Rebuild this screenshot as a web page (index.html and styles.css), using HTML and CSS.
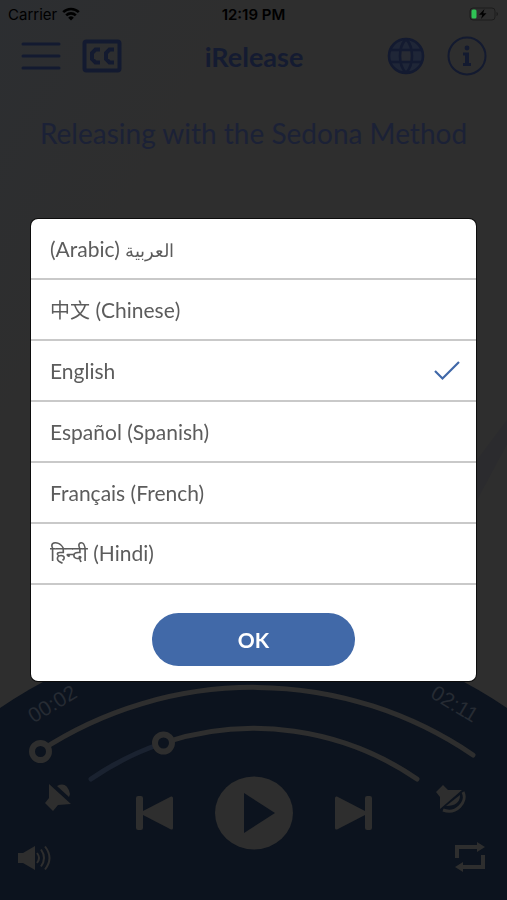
FILE: index.html
```html
<!DOCTYPE html>
<html lang="en">
<head>
<meta charset="utf-8">
<meta name="viewport" content="width=device-width, initial-scale=1">
<title>iRelease</title>
<link rel="stylesheet" href="styles.css">
</head>
<body>
<div class="app">
  <div class="status">
    <div class="status-left">
      <span>Carrier</span>
      <svg width="18" height="14" viewBox="0 0 18 14" fill="none" stroke="#000" stroke-width="2.6">
        <path d="M1.2 5.2a11 11 0 0 1 15.6 0M4.2 8.4a6.8 6.8 0 0 1 9.6 0"/>
        <path d="M9 13.6 6.2 10.7a4 4 0 0 1 5.6 0z" fill="#000" stroke="none"/>
      </svg>
    </div>
    <span class="clock">12:19 PM</span>
    <div class="status-right">
      <svg width="30" height="14" viewBox="0 0 30 14">
        <rect x="1" y="1" width="25" height="12" rx="3" fill="none" stroke="#1c1c1c"/>
        <rect x="2.500" y="2.500" width="5" height="9" rx="1.500" fill="#2fc455"/>
        <path d="M15.500 2 10 7.800h3.300L12 12l5.500-5.800h-3.300z" fill="#000"/>
        <path d="M27.500 5v4q1.500-.6 1.500-2t-1.500-2z" fill="#1c1c1c"/>
      </svg>
    </div>
  </div>

  <header class="nav">
    <div class="nav-group">
      <button class="icon-btn" type="button" aria-label="Menu">
        <svg width="40" height="40" viewBox="0 0 40 40" stroke="#131a30" stroke-width="3" stroke-linecap="round"><path d="M2 8h36M2 20h36M2 32h36"/></svg>
      </button>
      <button class="icon-btn" type="button" aria-label="Closed captions">
        <svg width="40" height="40" viewBox="0 0 40 40" fill="none" stroke="#131a30">
          <rect x="2.500" y="5.500" width="35" height="29" rx="2" stroke-width="4"/>
          <path d="M18 13.500h-4.500L10 17v6l3.500 3.500H18M32 13.500h-4.500L24 17v6l3.500 3.500H32" stroke-width="4"/>
        </svg>
      </button>
    </div>
    <h1 class="brand">iRelease</h1>
    <div class="nav-group nav-end">
      <button class="icon-btn" type="button" aria-label="Language">
        <svg width="40" height="40" viewBox="0 0 40 40" fill="none" stroke="#131a30" stroke-width="2.600">
          <circle cx="20" cy="20" r="17" fill="#1f2637"/>
          <path d="M15 14h10v12H15z" fill="#282b33" stroke="none"/>
          <path d="M20 3C12 11 12 29 20 37M20 3c8 8 8 26 0 34M4.500 14h31M4.500 26h31"/>
        </svg>
      </button>
      <button class="icon-btn" type="button" aria-label="Information">
        <svg width="40" height="40" viewBox="0 0 40 40">
          <circle cx="20" cy="20" r="18.500" fill="none" stroke="#131a30" stroke-width="2"/>
          <circle cx="20" cy="12" r="2.400" fill="#131a30"/>
          <path d="M16 16.500h6V27h2v3h-8v-3h2v-7.500h-2z" fill="#131a30"/>
        </svg>
      </button>
    </div>
  </header>

  <main class="stage">
    <h2 class="track">Releasing with the Sedona Method</h2>
    <svg class="facet" viewBox="0 0 30 90" aria-hidden="true"><path d="M30 10V34L0 90V50z" fill="#2b2b2e"/></svg>
  </main>

  <section class="player" aria-label="Player">
    <svg class="dial" viewBox="0 0 507 270" fill="none" stroke-linecap="round">
      <path d="M0 78A448 448 0 0 1 507 78V270H0z" fill="#0c131e"/>
      <path d="M40 121A390 390 0 0 1 473 125" stroke="#2e2e2e" stroke-width="5"/>
      <path d="M91 149A289 289 0 0 1 163 113" stroke="#1a2230" stroke-width="5"/>
      <path d="M163 113A289 289 0 0 1 417 149" stroke="#2e2e2e" stroke-width="5"/>
      <circle cx="40.500" cy="121.500" r="8.500" fill="#0c131e" stroke="#2e2e2e" stroke-width="6"/>
      <circle cx="163.500" cy="113" r="8.500" fill="#0c131e" stroke="#2e2e2e" stroke-width="6"/>
      <text class="time" text-anchor="middle" transform="translate(56 80) rotate(-31)">00:02</text>
      <text class="time" text-anchor="middle" transform="translate(451 80) rotate(31)">02:11</text>
    </svg>
    <div class="controls">
      <div class="row">
        <button class="icon-btn" type="button" aria-label="Mute voice">
          <svg width="40" height="40" viewBox="0 0 40 40" fill="#2e2e2e">
            <path d="M14 10 36 30l-13 1-5 6-8-8 4-5z"/>
            <path d="M22 12q10-5 13 8l-1 3z"/>
          </svg>
        </button>
        <div class="transport">
          <button class="icon-btn" type="button" aria-label="Previous">
            <svg width="40" height="40" viewBox="0 0 40 40" fill="#2e2e2e"><rect x="1" y="3" width="7" height="34" rx="2"/><path d="M8 18 36 3.500q2-.5 2 1.500v30q0 2-2 1.500L8 22z"/></svg>
          </button>
          <button class="icon-btn" type="button" aria-label="Play">
            <svg width="78" height="78" viewBox="0 0 78 78"><ellipse cx="39" cy="39" rx="39" ry="36.500" fill="#2e2e2e"/><path d="M29 19v40l31-20z" fill="#0c131e"/></svg>
          </button>
          <button class="icon-btn" type="button" aria-label="Next">
            <svg width="40" height="40" viewBox="0 0 40 40" fill="#2e2e2e"><rect x="32" y="3" width="7" height="34" rx="2"/><path d="M32 18 4 3.500Q2 3 2 5v30q0 2 2 1.500L32 22z"/></svg>
          </button>
        </div>
        <button class="icon-btn" type="button" aria-label="Mute music">
          <svg width="40" height="40" viewBox="0 0 40 40" fill="none" stroke="#2e2e2e" stroke-width="3">
            <path d="m4 18 7-7 5 5h14L8 35V23z" fill="#2e2e2e" stroke="none"/>
            <path d="M14 32 28 21q0 11-14 11z" fill="#2e2e2e" stroke="none"/>
            <path d="M31 18c5 10-7 23-20 18"/>
          </svg>
        </button>
      </div>
      <div class="row row-low">
        <button class="icon-btn" type="button" aria-label="Volume">
          <svg width="40" height="40" viewBox="0 0 40 40" fill="none" stroke="#2e2e2e" stroke-width="2">
            <path d="M3 15h5L20 8v24L8 25H3z" fill="#2e2e2e" stroke="none"/>
            <path d="M22 15q4 5 0 10M26 11.500q6 8.500 0 17M30 8.500q9 11.500 0 23"/>
          </svg>
        </button>
        <button class="icon-btn" type="button" aria-label="Repeat">
          <svg width="40" height="40" viewBox="0 0 40 40" fill="none" stroke="#2e2e2e" stroke-width="4">
            <path d="M5 20V9h21M31 17v12H10"/>
            <path d="M25 4v10l8-5zM11 24v10l-8-5z" fill="#2e2e2e" stroke="none"/>
          </svg>
        </button>
      </div>
    </div>
  </section>
</div>

<div class="overlay">
  <form class="dialog" role="dialog" aria-label="Choose a language">
    <label class="option"><span>(Arabic) <span class="arabic" lang="ar">العربية</span></span><input type="radio" name="language"></label>
    <label class="option"><span><span class="native" lang="zh">中文</span> (Chinese)</span><input type="radio" name="language"></label>
    <label class="option"><span>English</span><input type="radio" name="language" checked>
      <svg class="tick" width="26" height="20" viewBox="0 0 26 20" fill="none" stroke="#4068a8" stroke-width="2.200"><path d="m1 10 7.500 7.500L25 1"/></svg>
    </label>
    <label class="option"><span>Español (Spanish)</span><input type="radio" name="language"></label>
    <label class="option"><span>Français (French)</span><input type="radio" name="language"></label>
    <label class="option"><span><span class="native" lang="hi">हिन्दी</span> (Hindi)</span><input type="radio" name="language"></label>
    <div class="actions"><button class="ok" type="button">OK</button></div>
  </form>
</div>
</body>
</html>
```
FILE: styles.css
```css
* { box-sizing: border-box; }

body {
  margin: 0;
  background: #2e2e2e;
  font-family: Lato, "Noto Sans CJK SC", "Noto Sans", sans-serif;
}

.app {
  display: flex;
  flex-direction: column;
  min-height: 100vh;
  background: linear-gradient(120deg, #2c2e31 0, #2e2e2e 24%);
}

.status {
  display: grid;
  grid-template-columns: 1fr auto 1fr;
  align-items: center;
  height: 28px;
  padding: 0 8px;
  color: #000;
  font-family: Inter, "Liberation Sans", sans-serif;
  font-size: 15px;
}
.status-left { display: flex; align-items: center; gap: 5px; }
.status-right { display: flex; justify-content: flex-end; }
.clock { font-weight: 600; }

.nav {
  display: grid;
  grid-template-columns: 1fr auto 1fr;
  align-items: center;
  height: 56px;
  padding: 0 20px 0 21px;
}
.nav-group { display: flex; gap: 21px; }
.nav-end { justify-content: flex-end; }

.icon-btn {
  display: block;
  padding: 0;
  border: 0;
  background: none;
}
.icon-btn svg { display: block; }

.brand {
  margin: 0;
  color: #141b31;
  font-size: 27px;
  font-weight: 700;
}

.stage {
  position: relative;
  flex: 1;
  padding: 31px 20px;
}
.track {
  margin: 0;
  color: #1b2136;
  font-size: 28px;
  font-weight: 400;
  line-height: 36px;
  text-align: center;
}
.facet {
  position: absolute;
  right: 0;
  bottom: 130px;
  width: 30px;
}

.player { display: grid; }
.dial, .controls { grid-area: 1 / 1; }
.dial { display: block; width: 100%; }
.time {
  fill: #262b33;
  font-family: "Liberation Sans", sans-serif;
  font-size: 21px;
}
.controls {
  display: flex;
  flex-direction: column;
  justify-content: flex-end;
  padding: 0 15px 22px;
}
.row {
  display: flex;
  align-items: flex-start;
  justify-content: space-between;
  padding: 0 20px;
}
.row-low { padding: 0; margin-top: -14px; }
.transport { display: flex; align-items: center; gap: 40px; }

.overlay {
  position: fixed;
  inset: 0;
  display: grid;
  place-items: center;
}
.dialog {
  width: calc(100% - 62px);
  overflow: hidden;
  border-radius: 7px;
  background: #fff;
  box-shadow: 0 0 0 1px #0c0c0c;
}
.option {
  display: flex;
  align-items: center;
  justify-content: space-between;
  height: 61px;
  padding: 0 16px 0 19px;
  border-bottom: 2px solid #c9c9c9;
  color: #5c5c5c;
  font-size: 21px;
}
.option input {
  appearance: none;
  width: 0;
  height: 0;
  margin: 0;
}
.arabic { font-size: 18px; }
.native { font-size: 20px; }
.actions {
  display: flex;
  justify-content: center;
  padding: 28px 0 15px;
}
.ok {
  width: 203px;
  height: 53px;
  border: 0;
  border-radius: 27px;
  background: #4169a8;
  color: #fff;
  font-family: inherit;
  font-size: 21px;
  font-weight: 700;
}
```
